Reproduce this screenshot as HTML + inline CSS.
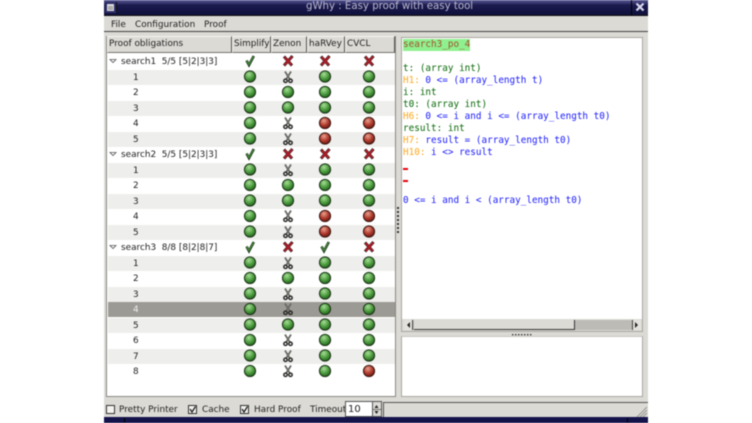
<!DOCTYPE html>
<html><head><meta charset="utf-8"><style>
html,body{margin:0;padding:0;background:#fff;width:752px;height:423px;overflow:hidden}
#w{position:absolute;left:0;top:0;width:752px;height:423px;overflow:hidden;filter:blur(.4px);font-family:"DejaVu Sans",sans-serif;font-size:8.9px;color:#222}
#w div,#w svg{position:absolute}
.t{white-space:pre;line-height:12px}
.s{left:108px;width:287px;height:15px;background:#eeeeec}
.n{left:133px}
.h{top:36px;height:17px;background:#dcdad5;border:1px solid;border-color:#f4f3f0 #55534f #77756f #f4f3f0;box-sizing:border-box;line-height:15px;padding-left:1px;white-space:pre}
.m{left:403px;font-family:"DejaVu Sans Mono",monospace;font-size:9.32px;line-height:12px;white-space:pre;color:#1a1aff}
.g{color:#0a6a0a}.o{color:#ffa81e}
.c{width:9px;height:9px;border:1px solid #333;background:#f4f3f0;top:405px;box-sizing:border-box}
</style></head><body><div id="w">
<div style="left:104px;top:0;width:544px;height:423px;background:#dcdad5"></div>
<div style="left:104px;top:0;width:544px;height:15px;background:linear-gradient(#5b5a96,#1b1a4e 35%,#10103c)"></div>
<div style="left:104px;top:15px;width:544px;height:1px;background:#111"></div>
<div style="left:105px;top:2px;width:11px;height:11px;background:#2d2c66;border-right:1px solid #111"></div>
<div style="left:107px;top:4px;width:7px;height:7px;background:#aaa;border:1px solid #ddd;border-top-width:2px;box-sizing:border-box"></div>
<div style="left:631px;top:0;width:1px;height:15px;background:#000"></div>
<div class="t" style="left:306px;top:1px;color:#b9b9cf;font-size:10.2px">gWhy : Easy proof with easy tool</div>
<svg width="752" height="16" style="left:0;top:0"><path d="M636.500 3.500l7 7M643.500 3.500l-7 7" stroke="#d8d8ee" stroke-width="2.200"/></svg>
<div style="left:104px;top:31px;width:544px;height:1px;background:#444"></div>
<div class="t" style="left:111px;top:19px">File</div>
<div class="t" style="left:135px;top:19px">Configuration</div>
<div class="t" style="left:204px;top:19px">Proof</div>

<div style="left:106px;top:36px;width:290px;height:361px;background:#fff;border:1px solid #8a8883;box-sizing:border-box"></div>
<div class="h" style="left:107px;width:125px">Proof obligations</div>
<div class="h" style="left:232px;width:39px">Simplify</div>
<div class="h" style="left:271px;width:36px">Zenon</div>
<div class="h" style="left:307px;width:38px">haRVey</div>
<div class="h" style="left:345px;width:50px">CVCL</div>

<div class="s" style="top:70px"></div><div class="s" style="top:101px"></div><div class="s" style="top:132px"></div>
<div class="s" style="top:163px"></div><div class="s" style="top:194px"></div><div class="s" style="top:225px"></div>
<div class="s" style="top:256px"></div><div class="s" style="top:287px"></div>
<div class="s" style="top:302px;background:#9c9a94"></div>
<div class="s" style="top:318px"></div><div class="s" style="top:349px"></div>

<div class="t" style="left:121px;top:56px">search1  5/5 [5|2|3|3]</div>
<div class="t" style="left:121px;top:149px">search2  5/5 [5|2|3|3]</div>
<div class="t" style="left:121px;top:242px">search3  8/8 [8|2|8|7]</div>
<div class="t n" style="top:72px">1</div><div class="t n" style="top:87px">2</div><div class="t n" style="top:103px">3</div><div class="t n" style="top:118px">4</div><div class="t n" style="top:134px">5</div>
<div class="t n" style="top:165px">1</div><div class="t n" style="top:180px">2</div><div class="t n" style="top:196px">3</div><div class="t n" style="top:211px">4</div><div class="t n" style="top:227px">5</div>
<div class="t n" style="top:258px">1</div><div class="t n" style="top:273px">2</div><div class="t n" style="top:289px">3</div><div class="t n" style="top:304px;color:#eee">4</div><div class="t n" style="top:320px">5</div><div class="t n" style="top:335px">6</div><div class="t n" style="top:351px">7</div><div class="t n" style="top:366px">8</div>

<svg width="752" height="423" style="left:0;top:0">
<defs>
<radialGradient id="gg" cx=".4" cy=".3" r=".75"><stop offset="0" stop-color="#a6dc96"/><stop offset=".55" stop-color="#4c9c3e"/><stop offset="1" stop-color="#1d5a1a"/></radialGradient>
<radialGradient id="rg" cx=".4" cy=".3" r=".75"><stop offset="0" stop-color="#e8a090"/><stop offset=".55" stop-color="#b03a2c"/><stop offset="1" stop-color="#641610"/></radialGradient>
<g id="G"><circle r="5.600" fill="url(#gg)" stroke="#1c3418" stroke-width="1"/></g>
<g id="R"><circle r="5.600" fill="url(#rg)" stroke="#3a1610" stroke-width="1"/></g>
<g id="S" fill="none"><path d="M-3-5.500 2 2.500M3-5.500-2 2.500" stroke="#6a6a66" stroke-width="1.800"/><circle cx="-2.500" cy="3.800" r="1.700" stroke-width="1.500" stroke="#2c2c2a"/><circle cx="2.500" cy="3.800" r="1.700" stroke-width="1.500" stroke="#2c2c2a"/></g>
<g id="X" fill="none"><path d="M-4-4.500 4 4.500M4.500-5-4 4.500" stroke="#3a2020" stroke-width="3"/><path d="M-3.500-4 3.500 4M4-4.500-3.500 4" stroke="#b01c28" stroke-width="1.900"/></g>
<g id="C" fill="none"><path d="M-3.500-.5-1 4 3.800-5" stroke="#1e3c1c" stroke-width="2.600"/><path d="M-3.500-.5-1 3.500 3.500-4.500" stroke="#4c8a40" stroke-width="1.200"/></g>
<path id="T" d="M-3-1.500H3L0 1.500Z" fill="#fff" stroke="#555" stroke-width=".8"/>
</defs>
<use href="#T" x="113" y="61"/><use href="#T" x="113" y="154"/><use href="#T" x="113" y="247"/>
<use href="#C" x="250" y="61"/><use href="#X" x="288" y="61"/><use href="#X" x="325" y="61"/><use href="#X" x="369" y="61"/>
<use href="#G" x="250" y="76.500"/><use href="#S" x="288" y="77"/><use href="#G" x="325" y="76.500"/><use href="#G" x="369" y="76.500"/>
<use href="#G" x="250" y="92"/><use href="#G" x="288" y="92"/><use href="#G" x="325" y="92"/><use href="#G" x="369" y="92"/>
<use href="#G" x="250" y="107.500"/><use href="#G" x="288" y="107.500"/><use href="#G" x="325" y="107.500"/><use href="#G" x="369" y="107.500"/>
<use href="#G" x="250" y="123"/><use href="#S" x="288" y="123"/><use href="#R" x="325" y="123"/><use href="#R" x="369" y="123"/>
<use href="#G" x="250" y="138.500"/><use href="#S" x="288" y="139"/><use href="#R" x="325" y="138.500"/><use href="#R" x="369" y="138.500"/>
<use href="#C" x="250" y="154"/><use href="#X" x="288" y="154"/><use href="#X" x="325" y="154"/><use href="#X" x="369" y="154"/>
<use href="#G" x="250" y="169.500"/><use href="#S" x="288" y="170"/><use href="#G" x="325" y="169.500"/><use href="#G" x="369" y="169.500"/>
<use href="#G" x="250" y="185"/><use href="#G" x="288" y="185"/><use href="#G" x="325" y="185"/><use href="#G" x="369" y="185"/>
<use href="#G" x="250" y="200.500"/><use href="#G" x="288" y="200.500"/><use href="#G" x="325" y="200.500"/><use href="#G" x="369" y="200.500"/>
<use href="#G" x="250" y="216"/><use href="#S" x="288" y="216"/><use href="#R" x="325" y="216"/><use href="#R" x="369" y="216"/>
<use href="#G" x="250" y="231.500"/><use href="#S" x="288" y="232"/><use href="#R" x="325" y="231.500"/><use href="#R" x="369" y="231.500"/>
<use href="#C" x="250" y="247"/><use href="#X" x="288" y="247"/><use href="#C" x="325" y="247"/><use href="#X" x="369" y="247"/>
<use href="#G" x="250" y="262.500"/><use href="#S" x="288" y="263"/><use href="#G" x="325" y="262.500"/><use href="#G" x="369" y="262.500"/>
<use href="#G" x="250" y="278"/><use href="#G" x="288" y="278"/><use href="#G" x="325" y="278"/><use href="#G" x="369" y="278"/>
<use href="#G" x="250" y="293.500"/><use href="#S" x="288" y="294"/><use href="#G" x="325" y="293.500"/><use href="#G" x="369" y="293.500"/>
<use href="#G" x="250" y="309"/><use href="#S" x="288" y="309"/><use href="#G" x="325" y="309"/><use href="#G" x="369" y="309"/>
<use href="#G" x="250" y="324.500"/><use href="#G" x="288" y="324.500"/><use href="#G" x="325" y="324.500"/><use href="#G" x="369" y="324.500"/>
<use href="#G" x="250" y="340"/><use href="#S" x="288" y="340"/><use href="#G" x="325" y="340"/><use href="#G" x="369" y="340"/>
<use href="#G" x="250" y="355.500"/><use href="#S" x="288" y="356"/><use href="#G" x="325" y="355.500"/><use href="#G" x="369" y="355.500"/>
<use href="#G" x="250" y="371"/><use href="#S" x="288" y="371"/><use href="#G" x="325" y="371"/><use href="#R" x="369" y="371"/>
<g fill="#333"><rect x="397" y="207" width="2" height="2"/><rect x="397" y="211" width="2" height="2"/><rect x="397" y="215" width="2" height="2"/><rect x="397" y="219" width="2" height="2"/><rect x="397" y="223" width="2" height="2"/><rect x="397" y="227" width="2" height="2"/><rect x="397" y="231" width="2" height="2"/>
<rect x="512" y="334" width="1.400" height="1.400"/><rect x="515" y="334" width="1.400" height="1.400"/><rect x="518" y="334" width="1.400" height="1.400"/><rect x="521" y="334" width="1.400" height="1.400"/><rect x="524" y="334" width="1.400" height="1.400"/><rect x="527" y="334" width="1.400" height="1.400"/><rect x="530" y="334" width="1.400" height="1.400"/></g>
</svg>

<div style="left:401px;top:37px;width:242px;height:295px;border:1px solid #a8a6a0;box-sizing:border-box;background:#fff"></div>
<div style="left:403px;top:39px;width:67px;height:12px;background:#8ff08f"></div>
<div class="m" style="top:39px;color:#a0522d">search3_po_4</div>
<div class="m g" style="top:63px">t: (array int)</div>
<div class="m" style="top:75px"><span class="o">H1:</span> 0 &lt;= (array_length t)</div>
<div class="m g" style="top:87px">i: int</div>
<div class="m g" style="top:99px">t0: (array int)</div>
<div class="m" style="top:111px"><span class="o">H6:</span> 0 &lt;= i and i &lt;= (array_length t0)</div>
<div class="m g" style="top:123px">result: int</div>
<div class="m" style="top:135px"><span class="o">H7:</span> result = (array_length t0)</div>
<div class="m" style="top:147px"><span class="o">H10:</span> i &lt;&gt; result</div>
<div style="left:403px;top:168px;width:5px;height:2px;background:#e8000a"></div>
<div style="left:403px;top:180px;width:5px;height:2px;background:#e8000a"></div>
<div class="m" style="top:195px">0 &lt;= i and i &lt; (array_length t0)</div>

<div style="left:402px;top:319px;width:240px;height:12px;background:#dcdad5"></div>
<div style="left:404px;top:320px;width:237px;height:10px;background:#bdbbb5"></div>
<div style="left:404px;top:320px;width:9px;height:10px;background:#e4e2dd;border-right:1px solid #444;box-sizing:border-box"></div>
<div style="left:632px;top:320px;width:9px;height:10px;background:#e4e2dd;border-left:1px solid #444;box-sizing:border-box"></div>
<div style="left:414px;top:320px;width:161px;height:10px;background:#dcdad5;border-right:1px solid #333;border-bottom:1px solid #333;box-sizing:border-box"></div>
<svg width="752" height="423" style="left:0;top:0"><path d="M410 322v6l-3-3ZM635 322v6l3-3Z" fill="#222"/></svg>

<div style="left:401px;top:336px;width:242px;height:61px;border:1px solid #a8a6a0;border-top-color:#c8c6c0;box-sizing:border-box;background:#fff"></div>

<div class="c" style="left:106px"></div>
<div class="t" style="left:119px;top:404px">Pretty Printer</div>
<div class="c" style="left:188px"></div>
<div class="t" style="left:202px;top:404px">Cache</div>
<div class="c" style="left:240px"></div>
<div class="t" style="left:254px;top:404px">Hard Proof</div>
<div class="t" style="left:310px;top:404px">Timeout</div>
<div style="left:345px;top:401px;width:37px;height:16px;background:#fff;border:1px solid #555;box-sizing:border-box"></div>
<div class="t" style="left:348px;top:404px;font-size:10px">10</div>
<div style="left:372px;top:402px;width:9px;height:14px;background:#dcdad5;border-left:1px solid #555;box-sizing:border-box"></div>
<svg width="752" height="423" style="left:0;top:0"><path d="M190 409l2 3 3.500-5.500M242 409l2 3 3.500-5.500" fill="none" stroke="#222" stroke-width="1.300"/><path d="M374.500 408l2-3 2 3ZM374.500 411l2 3 2-3Z" fill="#222"/><path d="M372 409.500h9" stroke="#555" stroke-width=".8"/><path d="M637 417l10-10M640 417l7-7M643 417l4-4" stroke="#9a9892"/></svg>
<div style="left:383px;top:402px;width:1px;height:15px;background:#555"></div>
<div style="left:383px;top:402px;width:265px;height:1px;background:#555"></div>
<div style="left:104px;top:417px;width:544px;height:6px;background:#14134a"></div>
<div style="left:124px;top:418px;width:1px;height:5px;background:#000"></div>
<div style="left:627px;top:418px;width:1px;height:5px;background:#000"></div>
</div></body></html>
